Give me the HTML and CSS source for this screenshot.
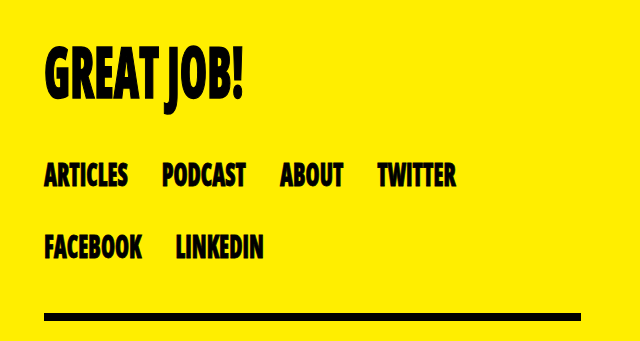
FILE: index.html
```html
<!DOCTYPE html>
<html lang="en">
<head>
    <meta charset="UTF-8">
    <meta name="viewport" content="width=device-width, initial-scale=1.0">
    <title>Great Job!</title>
    <link rel="stylesheet" href="styles.css">
</head>
<body>

    <div class="site">
        <header class="header">
            <h1 class="logo">GREAT JOB!</h1>

            <nav class="nav">
                <a href="#">ARTICLES</a>
                <a href="#">PODCAST</a>
                <a href="#">ABOUT</a>
                <a href="#">TWITTER</a>
                <a href="#">FACEBOOK</a>
                <a href="#">LINKEDIN</a>
            </nav>

            <hr class="rule">
        </header>

        <main class="content"></main>
    </div>

</body>
</html>
```

FILE: styles.css
```css
html {
    overflow-y: scroll;
}
body {
    margin: 0;
    background-color: #ffee00;
    color: #000;
    font-family: "Open Sans", Arial, sans-serif;
    font-stretch: 75%;
    font-weight: 800;
}
.site {
    padding: 36px 44px 0;
}
.header {
    width: 537px;
}
.logo {
    margin: 0;
    font-size: 70px;
    line-height: 70px;
    font-weight: 800;
    -webkit-text-stroke: 1.5px #000;
    transform: scaleX(0.63);
    transform-origin: left top;
}
.nav {
    display: flex;
    flex-wrap: wrap;
    column-gap: calc(34px / 0.73);
    row-gap: 32px;
    width: calc(440px / 0.73);
    margin-top: 48px;
    transform: scaleX(0.73);
    transform-origin: left top;
}
.nav a {
    color: #000;
    text-decoration: none;
    font-size: 31px;
    line-height: 40px;
    -webkit-text-stroke: 0.8px #000;
}
.rule {
    margin: 47px 0 0;
    height: 8px;
    border: none;
    background: #000;
}
.content {
    min-height: 4200px;
}
```
